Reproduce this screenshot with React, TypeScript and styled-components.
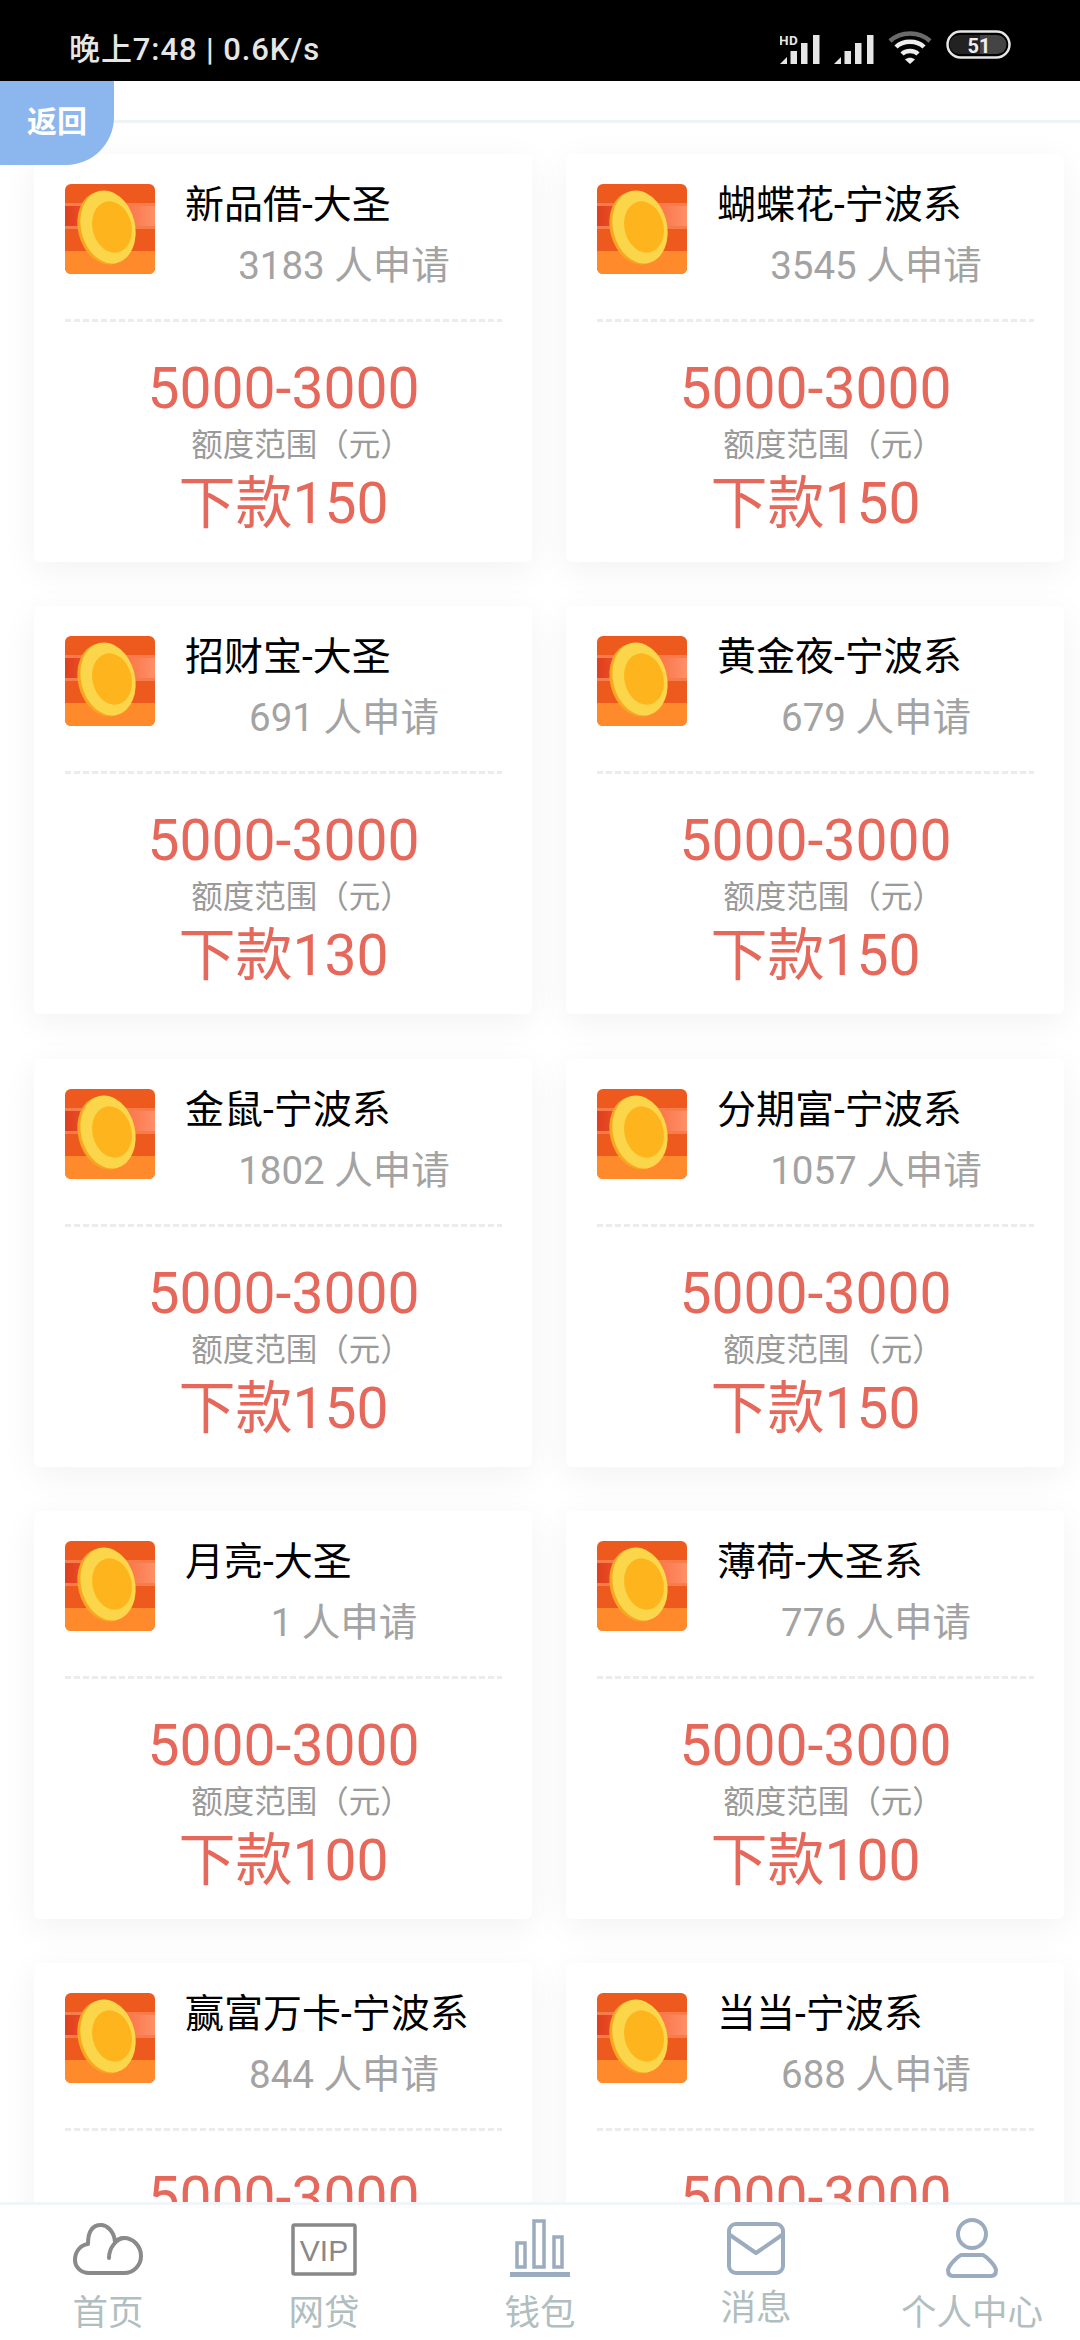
import React from 'react';
import styled, { createGlobalStyle } from 'styled-components';

const Global = createGlobalStyle`
  html, body { margin: 0; padding: 0; background: #fff; }
  body { font-family: Roboto, "Noto Sans CJK SC", sans-serif; }
  * { box-sizing: border-box; }
`;
const Page = styled.div`
  position: relative; width: 1080px; height: 2340px; display: flex; flex-direction: column;
  overflow: hidden; background: #fff;
`;
const StatusBar = styled.div`
  height: 81px; flex: none; background: #000; display: flex; align-items: center;
  justify-content: space-between; padding: 15px 68px 0 69px; color: #e6e6e6;
`;
const StatusText = styled.span`font-size: 31px; font-weight: 500; letter-spacing: 0.9px; margin-top: -4px;`;
const StatusIcons = styled.div`display: flex; align-items: flex-start; gap: 14px;`;
const Header = styled.div`height: 42px; flex: none; border-bottom: 3px solid #eef3f6;`;
const Back = styled.div`
  position: absolute; left: 0; top: 81px; width: 114px; height: 84px; background: #8cb6ee;
  border-bottom-right-radius: 48px; color: #fff; font-size: 30px; font-weight: 700;
  display: flex; align-items: center; justify-content: center; padding: 0 0 9px 0;
`;
const Content = styled.div`flex: 1; min-height: 0; overflow: hidden; padding: 31px 15px 0 34px;`;
const Grid = styled.div`display: grid; grid-template-columns: 498px 498px; column-gap: 34px; row-gap: 44.25px;`;
const Card = styled.div`
  height: 408px; background: #fff; border-radius: 6px; padding: 30px 30px 0 31px;
  box-shadow: 0 8px 36px rgba(0,0,0,0.055);
`;
const Head = styled.div`display: flex; gap: 31px; height: 135px;`;
const HeadText = styled.div`flex: 1; display: flex; flex-direction: column;`;
const Title = styled.div`font-size: 39px; line-height: 42px; color: #000; white-space: nowrap; margin-left: -1px;`;
const Count = styled.div`font-size: 38.5px; line-height: 50px; color: #a3a3a3; text-align: center; margin-top: 15px; white-space: nowrap;`;
const Divider = styled.div`
  height: 3px; background: repeating-linear-gradient(90deg, #ececec 0 6px, transparent 6px 9px);
`;
const Body = styled.div`display: flex; flex-direction: column; align-items: center; padding-top: 37px;`;
const Range = styled.div`font-size: 57px; line-height: 60px; color: #e5685a;`;
const Label = styled.div`font-size: 31.5px; line-height: 44px; color: #9a9a9a; margin-top: 5px; padding-left: 36px;`;
const Amount = styled.div`font-size: 57px; line-height: 62px; color: #e5685a; margin-top: 5px;`;
const Nav = styled.div`
  height: 138px; flex: none; background: #fff; border-top: 3px solid #f1f4f8;
  display: grid; grid-template-columns: repeat(5, 216px);
`;
const NavItem = styled.div`display: flex; flex-direction: column; align-items: center; padding-top: 13px;`;
const NavLabel = styled.div<{ $lift?: boolean }>`
  font-size: 35.5px; line-height: 42px; color: #b0bec0; white-space: nowrap;
  margin-top: ${p => (p.$lift ? '9px' : '14px')};
`;
const IconSlot = styled.svg`display: block; flex: none;`;

const Coin = () => (
  <IconSlot width="90" height="90" viewBox="0 0 90 90">
    <defs>
      <clipPath id="r"><rect width="90" height="90" rx="6" /></clipPath>
      <linearGradient id="s" x1="0" x2="1" y1="0" y2="0">
        <stop offset="0" stopColor="#e03e1c" /><stop offset="0.55" stopColor="#f86a3a" /><stop offset="1" stopColor="#ff8f68" />
      </linearGradient>
    </defs>
    <g clipPath="url(#r)">
      <rect width="90" height="90" fill="#ee5a1e" />
      <rect y="19" width="90" height="3" fill="#f67c4c" />
      <rect y="22" width="90" height="20" fill="url(#s)" />
      <rect y="42" width="90" height="3" fill="#f67c4c" />
      <rect y="67" width="90" height="23" fill="#ff8a2c" />
      <ellipse cx="40" cy="44" rx="27" ry="37" transform="rotate(-14 40 44)" fill="#f7a722" />
      <ellipse cx="43" cy="43" rx="27" ry="37" transform="rotate(-14 43 43)" fill="#fbd64a" />
      <ellipse cx="47" cy="43" rx="19.500" ry="26" transform="rotate(-14 47 43)" fill="#feb41c" />
    </g>
  </IconSlot>
);

const Bars = ({ hd }: { hd?: boolean }) => (
  <IconSlot width="40" height="36" viewBox="0 0 40 36" fill="#e6e6e6">
    <polygon points="0,34 7,27 7,34" />
    <rect x="10.5" y="21" width="6.5" height="13" />
    <rect x="21" y="13" width="6.5" height="21" />
    <rect x="33" y="5" width="6.5" height="29" />
    {hd && <text x="-1" y="15" fontSize="13.5" fontWeight="700" fontFamily="Roboto, sans-serif" letterSpacing="0.5">HD</text>}
  </IconSlot>
);
const Wifi = () => (
  <IconSlot width="44" height="36" viewBox="0 0 44 36" fill="none">
    <path d="M2 11 C13 1 31 1 42 11" stroke="#6a6a6a" strokeWidth="4.5" />
    <path d="M8 17 C15 10 29 10 36 17" stroke="#eee" strokeWidth="4.5" />
    <path d="M14 24 C18 20 26 20 30 24" stroke="#eee" strokeWidth="4.5" />
    <path d="M22 34 L17 29.500 C20 27 24 27 27 29.500 Z" fill="#eee" />
  </IconSlot>
);
const Battery = () => (
  <IconSlot width="66" height="30" viewBox="0 0 66 30">
    <rect x="1.500" y="1.500" width="62" height="26" rx="13" fill="none" stroke="#e6e6e6" strokeWidth="2.500" />
    <path d="M13 5 H34 V24 H13 A9.500 9.500 0 0 1 13 5 Z" fill="#222" />
    <path d="M34 5 H51 A9.500 9.500 0 0 1 51 24 H34 Z" fill="#444" />
    <text x="33" y="22.500" textAnchor="middle" fontSize="20" fontWeight="700" fontFamily="Roboto, sans-serif" fill="#eee">51</text>
  </IconSlot>
);

const stroke = { fill: 'none', strokeLinecap: 'round' as const, strokeLinejoin: 'round' as const };
const CloudIcon = () => (
  <IconSlot width="72" height="60" viewBox="0 0 72 60">
    <path d="M23 55 H52 C62 55 69 47 69 38 C69 28 61 20 52 20 C48 20 44 22 43 24 C42 12 34 7 29 7 C20 7 16 14 16 26 C8 27 3 34 3 42 C3 49 9 55 17 55 Z" stroke="#8a8a8a" strokeWidth="4" {...stroke} />
    <path d="M37 40 C37 30 44 21 52 20" stroke="#8a8a8a" strokeWidth="4" {...stroke} />
  </IconSlot>
);
const VipIcon = () => (
  <IconSlot width="66" height="60" viewBox="0 0 66 60">
    <rect x="2" y="7" width="62" height="49" rx="1.500" fill="none" stroke="#888" strokeWidth="3.500" />
    <text x="33" y="43" textAnchor="middle" fontSize="30" fontFamily="Liberation Sans, sans-serif" fill="#888">VIP</text>
  </IconSlot>
);
const ChartIcon = () => (
  <IconSlot width="60" height="60" viewBox="0 0 60 60">
    <g fill="none" stroke="#9cacbf" strokeWidth="3.500">
      <rect x="7" y="25" width="8" height="24" />
      <rect x="24" y="3" width="10" height="46" />
      <rect x="44" y="19" width="8" height="30" />
    </g>
    <rect x="0" y="54" width="60" height="5" fill="#9cacbf" />
  </IconSlot>
);
const MailIcon = () => (
  <IconSlot width="60" height="60" viewBox="0 0 60 60">
    <rect x="3" y="6" width="54" height="49" rx="7" fill="none" stroke="#9cacbf" strokeWidth="4" />
    <path d="M4 17 L30 35 L56 17" stroke="#9cacbf" strokeWidth="4" {...stroke} />
  </IconSlot>
);
const PersonIcon = () => (
  <IconSlot width="56" height="60" viewBox="0 0 56 60">
    <circle cx="28" cy="16" r="14" fill="none" stroke="#9cacbf" strokeWidth="4" />
    <path d="M17 37 H39 C43 39 51 47 52 52 C52 56 50 58 47 58 H9 C6 58 4 56 4 52 C5 47 13 39 17 37 Z" stroke="#9cacbf" strokeWidth="4" {...stroke} />
  </IconSlot>
);

const items = [
  ['新品借-大圣', '3183', '150'], ['蝴蝶花-宁波系', '3545', '150'],
  ['招财宝-大圣', '691', '130'], ['黄金夜-宁波系', '679', '150'],
  ['金鼠-宁波系', '1802', '150'], ['分期富-宁波系', '1057', '150'],
  ['月亮-大圣', '1', '100'], ['薄荷-大圣系', '776', '100'],
  ['赢富万卡-宁波系', '844', '100'], ['当当-宁波系', '688', '100'],
];
const nav = [
  { label: '首页', icon: <CloudIcon /> }, { label: '网贷', icon: <VipIcon /> },
  { label: '钱包', icon: <ChartIcon /> }, { label: '消息', icon: <MailIcon />, lift: true },
  { label: '个人中心', icon: <PersonIcon /> },
];

export default function App() {
  return (
    <Page>
      <Global />
      <StatusBar>
        <StatusText>晚上7:48 | 0.6K/s</StatusText>
        <StatusIcons>
          <Bars hd /><Bars /><Wifi /><Battery />
        </StatusIcons>
      </StatusBar>
      <Header />
      <Back>返回</Back>
      <Content>
        <Grid>
          {items.map(([name, count, amount]) => (
            <Card key={name}>
              <Head>
                <Coin />
                <HeadText>
                  <Title>{name}</Title>
                  <Count>{count} 人申请</Count>
                </HeadText>
              </Head>
              <Divider />
              <Body>
                <Range>5000-3000</Range>
                <Label>额度范围（元）</Label>
                <Amount>下款{amount}</Amount>
              </Body>
            </Card>
          ))}
        </Grid>
      </Content>
      <Nav>
        {nav.map(n => (
          <NavItem key={n.label}>
            {n.icon}
            <NavLabel $lift={n.lift}>{n.label}</NavLabel>
          </NavItem>
        ))}
      </Nav>
    </Page>
  );
}
